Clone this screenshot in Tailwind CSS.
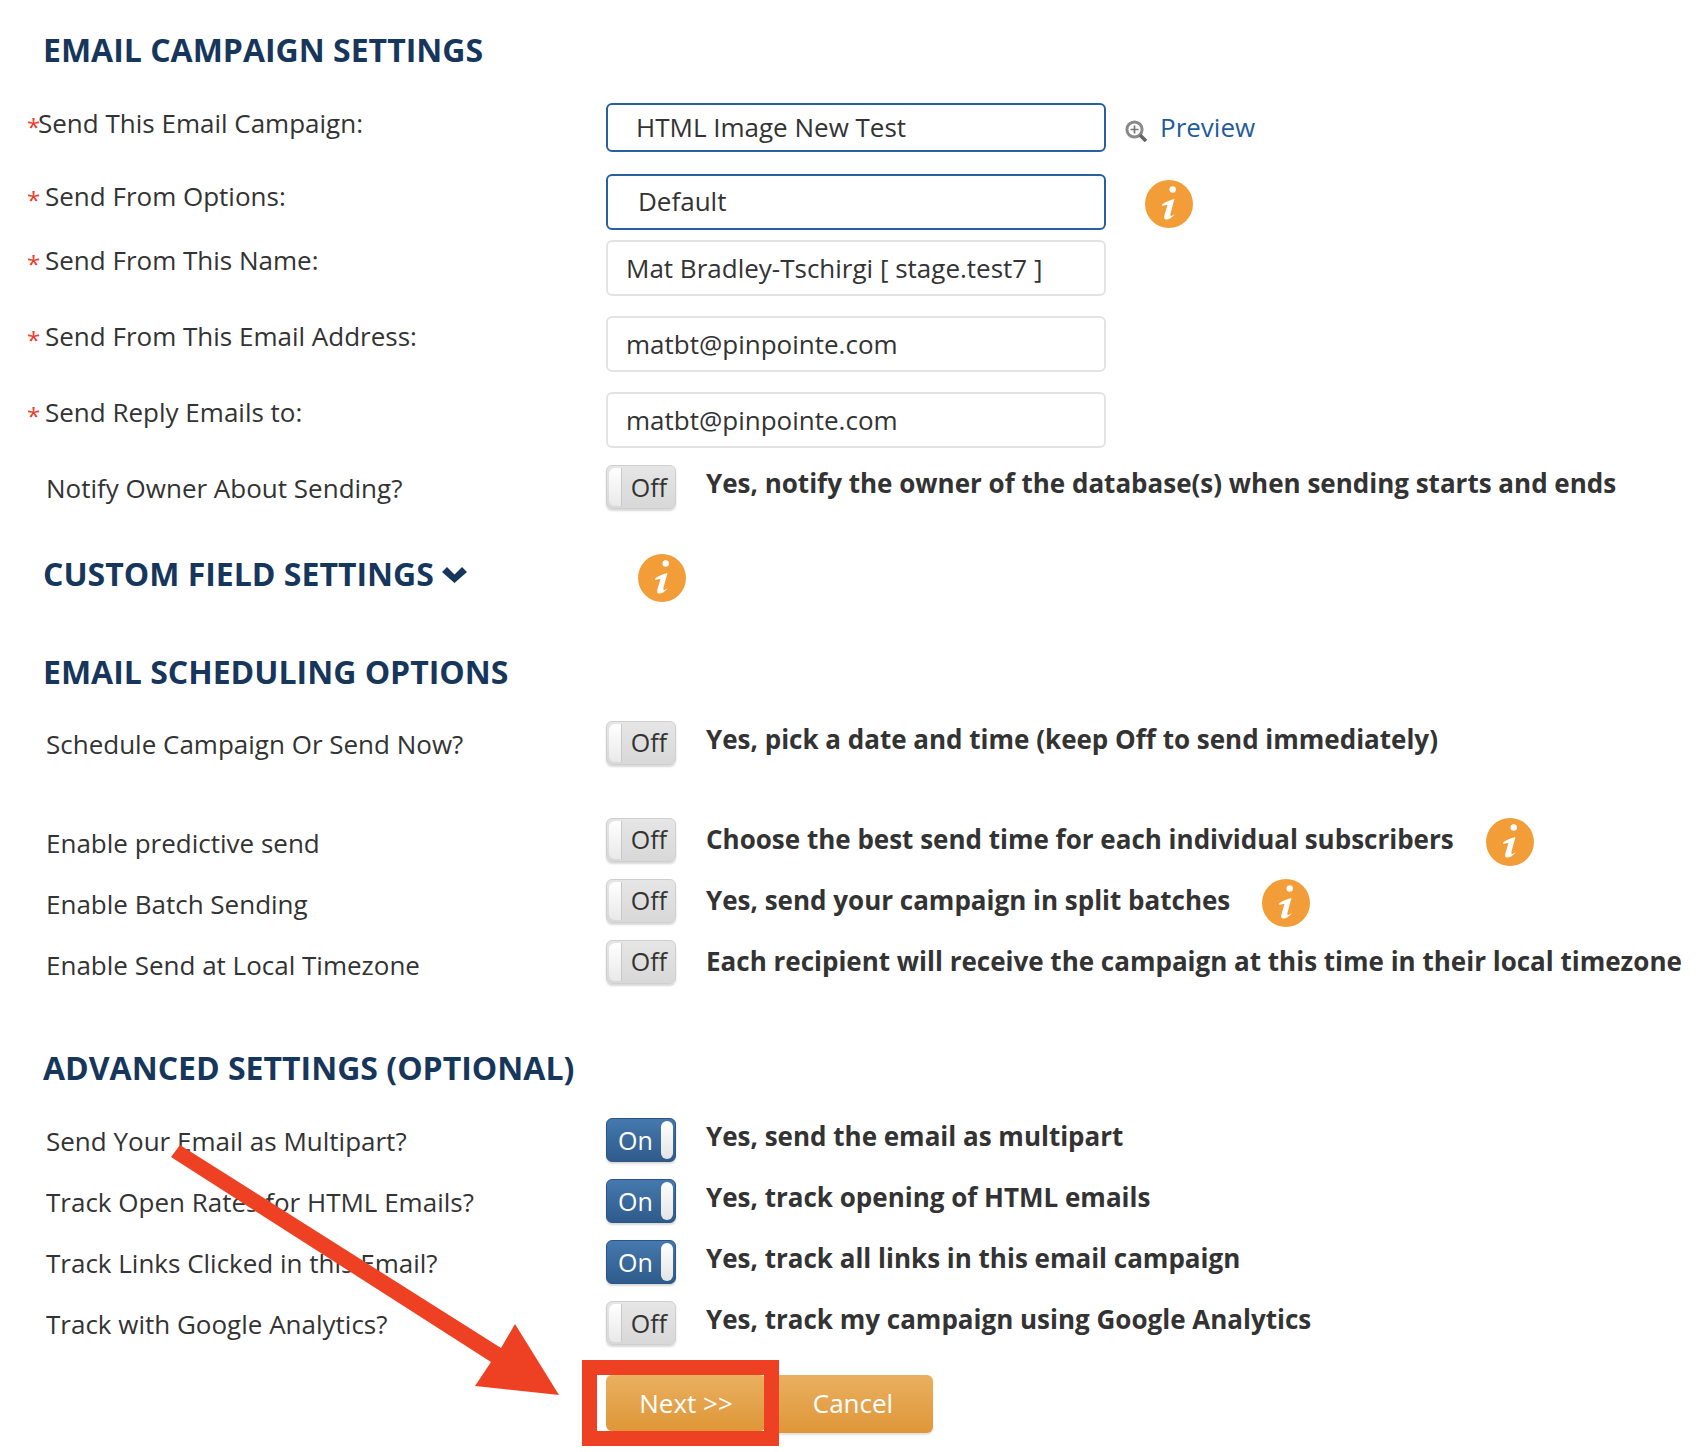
<!DOCTYPE html>
<html>
<head>
<meta charset="utf-8">
<title>Email Campaign Settings</title>
<script src="https://cdn.jsdelivr.net/npm/@tailwindcss/browser@4"></script>
</head>
<body class="bg-white">
<main class="relative w-[1702px] h-[1452px] overflow-hidden bg-white font-['Open_Sans',sans-serif] text-[26px] leading-[36px] text-[#333]">

  <h2 class="pt-[30px] pl-[43px] h-[103px] text-[32px] leading-[40px] font-bold text-[#17365c]">EMAIL CAMPAIGN SETTINGS</h2>

  <div class="flex h-[49px]">
    <div class="w-[606px] pl-[27px] pt-[2px]"><span class="inline-block w-[11px] relative top-[3px] text-[24px] text-[#f03a2e]">*</span>Send This Email Campaign:</div>
    <div class="flex items-center w-[500px] h-[49px] pl-[28px] pb-[2px] border-2 border-[#275f9f] rounded-md">HTML Image New Test</div>
    <svg class="ml-[19px] mt-[17px] w-[22px] h-[22px]" viewBox="0 0 22 22" fill="none"><circle cx="9.5" cy="9.5" r="7.6" stroke="#8a8a8a" stroke-width="3"/><path d="M5.5 9.5h8M9.5 5.5v8" stroke="#777" stroke-width="1.7"/><path d="M15 15L21 21" stroke="#666" stroke-width="3.6"/></svg>
    <a class="ml-[13px] mt-[6px] text-[#1f5c9e]">Preview</a>
  </div>

  <div class="flex h-[56px] mt-[22px]">
    <div class="w-[606px] pl-[27px] pt-[4px]"><span class="inline-block w-[18px] relative top-[3px] text-[24px] text-[#f03a2e]">*</span>Send From Options:</div>
    <div class="flex items-center w-[500px] h-[56px] pl-[30px] pb-[2px] border-2 border-[#275f9f] rounded-md">Default</div>
    <svg class="ml-[39px] mt-[6px] w-[48px] h-[48px]" viewBox="0 0 48 48"><circle cx="24" cy="24" r="24" fill="#f29d38"/><circle cx="27.7" cy="9.5" r="3.2" fill="#fff"/><path d="M17 24.5Q22 20.5 29.5 19L25.5 33.5Q24.8 36.5 26.5 36L30 34Q25 40 20.5 39.5Q18.5 39 19.5 35L22.5 25Q19.5 25 17.5 26Z" fill="#fff"/></svg>
  </div>

  <div class="flex h-[56px] mt-[10px]">
    <div class="w-[606px] pl-[27px] pt-[2px]"><span class="inline-block w-[18px] relative top-[3px] text-[24px] text-[#f03a2e]">*</span>Send From This Name:</div>
    <div class="flex items-center w-[500px] h-[56px] pl-[18px] border-2 border-[#e3e3e3] rounded-md">Mat Bradley-Tschirgi [ stage.test7 ]</div>
  </div>

  <div class="flex h-[56px] mt-[20px]">
    <div class="w-[606px] pl-[27px] pt-[2px]"><span class="inline-block w-[18px] relative top-[3px] text-[24px] text-[#f03a2e]">*</span>Send From This Email Address:</div>
    <div class="flex items-center w-[500px] h-[56px] pl-[18px] border-2 border-[#e3e3e3] rounded-md">matbt@pinpointe.com</div>
  </div>

  <div class="flex h-[56px] mt-[20px]">
    <div class="w-[606px] pl-[27px] pt-[2px]"><span class="inline-block w-[18px] relative top-[3px] text-[24px] text-[#f03a2e]">*</span>Send Reply Emails to:</div>
    <div class="flex items-center w-[500px] h-[56px] pl-[18px] border-2 border-[#e3e3e3] rounded-md">matbt@pinpointe.com</div>
  </div>

  <div class="flex h-[44px] mt-[17px]">
    <div class="w-[606px] pl-[46px] pt-[5px]">Notify Owner About Sending?</div>
    <div class="flex justify-end items-center w-[70px] h-[44px] pr-[8px] rounded-md border border-[#cfcfcf] bg-gradient-to-b from-[#e6e6e6] to-[#d8d8d8] shadow-[0_2px_2px_rgba(0,0,0,0.15)] relative"><span class="absolute left-[2px] top-[2px] bottom-[2px] w-[13px] rounded-l-md bg-gradient-to-b from-[#ffffff] to-[#e9e9e9] border-r border-[#c8c8c8]"></span><span class="text-[25px]">Off</span></div>
    <div class="ml-[30px] font-bold">Yes, notify the owner of the database(s) when sending starts and ends</div>
  </div>

  <div class="flex h-[48px] mt-[45px]">
    <div class="w-[638px] pl-[43px] flex items-center pb-[8px]">
      <h2 class="text-[32px] leading-[48px] font-bold text-[#17365c]">CUSTOM FIELD SETTINGS</h2>
      <svg class="ml-[8px] w-[25px] h-[17px]" viewBox="0 0 25 17"><path d="M0 6L5 1L12.5 8.500L20 1L25 6L12.500 17Z" fill="#17365c"/></svg>
    </div>
    <svg class="w-[48px] h-[48px]" viewBox="0 0 48 48"><circle cx="24" cy="24" r="24" fill="#f29d38"/><circle cx="27.7" cy="9.5" r="3.2" fill="#fff"/><path d="M17 24.5Q22 20.5 29.5 19L25.5 33.5Q24.8 36.5 26.5 36L30 34Q25 40 20.5 39.5Q18.5 39 19.5 35L22.5 25Q19.5 25 17.5 26Z" fill="#fff"/></svg>
  </div>

  <h2 class="mt-[50px] pl-[43px] text-[32px] leading-[40px] font-bold text-[#17365c]">EMAIL SCHEDULING OPTIONS</h2>

  <div class="flex h-[44px] mt-[29px]">
    <div class="w-[606px] pl-[46px] pt-[5px]">Schedule Campaign Or Send Now?</div>
    <div class="flex justify-end items-center w-[70px] h-[44px] pr-[8px] pb-[2px] rounded-md border border-[#cfcfcf] bg-gradient-to-b from-[#e6e6e6] to-[#d8d8d8] shadow-[0_2px_2px_rgba(0,0,0,0.15)] relative"><span class="absolute left-[2px] top-[2px] bottom-[2px] w-[13px] rounded-l-md bg-gradient-to-b from-[#ffffff] to-[#e9e9e9] border-r border-[#c8c8c8]"></span><span class="text-[25px]">Off</span></div>
    <div class="ml-[30px] font-bold">Yes, pick a date and time (keep Off to send immediately)</div>
  </div>

  <div class="flex h-[44px] mt-[53px]">
    <div class="w-[606px] pl-[46px] pt-[7px]">Enable predictive send</div>
    <div class="flex justify-end items-center w-[70px] h-[44px] pr-[8px] pb-[2px] rounded-md border border-[#cfcfcf] bg-gradient-to-b from-[#e6e6e6] to-[#d8d8d8] shadow-[0_2px_2px_rgba(0,0,0,0.15)] relative"><span class="absolute left-[2px] top-[2px] bottom-[2px] w-[13px] rounded-l-md bg-gradient-to-b from-[#ffffff] to-[#e9e9e9] border-r border-[#c8c8c8]"></span><span class="text-[25px]">Off</span></div>
    <div class="ml-[30px] pt-[3px] font-bold">Choose the best send time for each individual subscribers</div>
    <svg class="ml-[32px] w-[48px] h-[48px]" viewBox="0 0 48 48"><circle cx="24" cy="24" r="24" fill="#f29d38"/><circle cx="27.7" cy="9.5" r="3.2" fill="#fff"/><path d="M17 24.5Q22 20.5 29.5 19L25.5 33.5Q24.8 36.5 26.5 36L30 34Q25 40 20.5 39.5Q18.5 39 19.5 35L22.5 25Q19.5 25 17.5 26Z" fill="#fff"/></svg>
  </div>

  <div class="flex h-[44px] mt-[17px]">
    <div class="w-[606px] pl-[46px] pt-[7px]">Enable Batch Sending</div>
    <div class="flex justify-end items-center w-[70px] h-[44px] pr-[8px] pb-[2px] rounded-md border border-[#cfcfcf] bg-gradient-to-b from-[#e6e6e6] to-[#d8d8d8] shadow-[0_2px_2px_rgba(0,0,0,0.15)] relative"><span class="absolute left-[2px] top-[2px] bottom-[2px] w-[13px] rounded-l-md bg-gradient-to-b from-[#ffffff] to-[#e9e9e9] border-r border-[#c8c8c8]"></span><span class="text-[25px]">Off</span></div>
    <div class="ml-[30px] pt-[3px] font-bold">Yes, send your campaign in split batches</div>
    <svg class="ml-[32px] w-[48px] h-[48px]" viewBox="0 0 48 48"><circle cx="24" cy="24" r="24" fill="#f29d38"/><circle cx="27.7" cy="9.5" r="3.2" fill="#fff"/><path d="M17 24.5Q22 20.5 29.5 19L25.5 33.5Q24.8 36.5 26.5 36L30 34Q25 40 20.5 39.5Q18.5 39 19.5 35L22.5 25Q19.5 25 17.5 26Z" fill="#fff"/></svg>
  </div>

  <div class="flex h-[44px] mt-[17px]">
    <div class="w-[606px] pl-[46px] pt-[7px]">Enable Send at Local Timezone</div>
    <div class="flex justify-end items-center w-[70px] h-[44px] pr-[8px] pb-[2px] rounded-md border border-[#cfcfcf] bg-gradient-to-b from-[#e6e6e6] to-[#d8d8d8] shadow-[0_2px_2px_rgba(0,0,0,0.15)] relative"><span class="absolute left-[2px] top-[2px] bottom-[2px] w-[13px] rounded-l-md bg-gradient-to-b from-[#ffffff] to-[#e9e9e9] border-r border-[#c8c8c8]"></span><span class="text-[25px]">Off</span></div>
    <div class="ml-[30px] pt-[3px] font-bold whitespace-nowrap">Each recipient will receive the campaign at this time in their local timezone</div>
  </div>

  <h2 class="mt-[64px] pl-[43px] text-[32px] leading-[40px] font-bold text-[#17365c]">ADVANCED SETTINGS (OPTIONAL)</h2>

  <div class="flex h-[44px] mt-[30px]">
    <div class="w-[606px] pl-[46px] pt-[5px]">Send Your Email as Multipart?</div>
    <div class="flex items-center w-[70px] h-[44px] pl-[11px] rounded-md border border-[#2a5584] bg-gradient-to-b from-[#4579ae] to-[#2f5b8c] shadow-[0_2px_2px_rgba(0,0,0,0.15)] relative"><span class="text-[25px] text-white">On</span><span class="absolute right-[2px] top-[2px] bottom-[2px] w-[12px] rounded-md bg-gradient-to-b from-[#ffffff] to-[#e4e4e4]"></span></div>
    <div class="ml-[30px] font-bold">Yes, send the email as multipart</div>
  </div>

  <div class="flex h-[44px] mt-[17px]">
    <div class="w-[606px] pl-[46px] pt-[5px]">Track Open Rates for HTML Emails?</div>
    <div class="flex items-center w-[70px] h-[44px] pl-[11px] rounded-md border border-[#2a5584] bg-gradient-to-b from-[#4579ae] to-[#2f5b8c] shadow-[0_2px_2px_rgba(0,0,0,0.15)] relative"><span class="text-[25px] text-white">On</span><span class="absolute right-[2px] top-[2px] bottom-[2px] w-[12px] rounded-md bg-gradient-to-b from-[#ffffff] to-[#e4e4e4]"></span></div>
    <div class="ml-[30px] font-bold">Yes, track opening of HTML emails</div>
  </div>

  <div class="flex h-[44px] mt-[17px]">
    <div class="w-[606px] pl-[46px] pt-[5px]">Track Links Clicked in this Email?</div>
    <div class="flex items-center w-[70px] h-[44px] pl-[11px] rounded-md border border-[#2a5584] bg-gradient-to-b from-[#4579ae] to-[#2f5b8c] shadow-[0_2px_2px_rgba(0,0,0,0.15)] relative"><span class="text-[25px] text-white">On</span><span class="absolute right-[2px] top-[2px] bottom-[2px] w-[12px] rounded-md bg-gradient-to-b from-[#ffffff] to-[#e4e4e4]"></span></div>
    <div class="ml-[30px] font-bold">Yes, track all links in this email campaign</div>
  </div>

  <div class="flex h-[44px] mt-[17px]">
    <div class="w-[606px] pl-[46px] pt-[5px]">Track with Google Analytics?</div>
    <div class="flex justify-end items-center w-[70px] h-[44px] pr-[8px] rounded-md border border-[#cfcfcf] bg-gradient-to-b from-[#e6e6e6] to-[#d8d8d8] shadow-[0_2px_2px_rgba(0,0,0,0.15)] relative"><span class="absolute left-[2px] top-[2px] bottom-[2px] w-[13px] rounded-l-md bg-gradient-to-b from-[#ffffff] to-[#e9e9e9] border-r border-[#c8c8c8]"></span><span class="text-[25px]">Off</span></div>
    <div class="ml-[30px] font-bold">Yes, track my campaign using Google Analytics</div>
  </div>

  <div class="flex gap-[7px] ml-[606px] mt-[30px]">
    <button class="w-[160px] h-[56px] rounded-md bg-gradient-to-b from-[#e9b05f] to-[#df9637] text-white">Next &gt;&gt;</button>
    <button class="w-[160px] h-[58px] rounded-md bg-gradient-to-b from-[#e9b05f] to-[#df9637] text-white shadow-[0_2px_2px_rgba(0,0,0,0.12)] pb-[2px]">Cancel</button>
  </div>

  <div class="absolute left-[582px] top-[1360px] w-[197px] h-[86px] border-[15px] border-[#ee4124]"></div>
  <svg class="absolute left-0 top-0 w-[1702px] h-[1452px] pointer-events-none" viewBox="0 0 1702 1452"><polygon points="180,1145 501,1348 515,1324 559,1395 475,1386 491,1362 171,1157" fill="#ee4124"/></svg>
</main>
</body>
</html>
